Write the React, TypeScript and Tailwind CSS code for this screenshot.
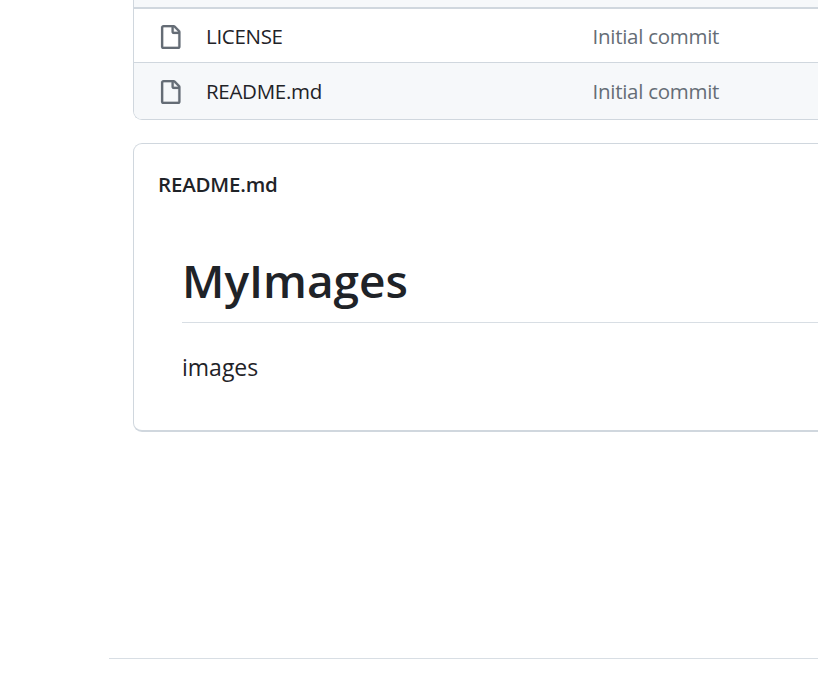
function FileIcon() {
  return (
    <svg viewBox="0 0 16 16" className="block h-6 w-6 shrink-0 fill-[#656d76] stroke-[#656d76] stroke-[0.12]" aria-hidden="true">
      <path d="M2 1.75C2 .784 2.784 0 3.75 0h6.586c.464 0 .909.184 1.237.513l2.914 2.914c.329.328.513.773.513 1.237v9.586A1.75 1.75 0 0 1 13.25 16h-9.5A1.75 1.75 0 0 1 2 14.25Zm1.75-.25a.25.25 0 0 0-.25.25v12.5c0 .138.112.25.25.25h9.5a.25.25 0 0 0 .25-.25V6h-2.75A1.75 1.75 0 0 1 9 4.25V1.5Zm6.75.062V4.25c0 .138.112.25.25.25h2.688l-.011-.013-2.914-2.914-.013-.011Z" />
    </svg>
  );
}

function FileRow({ name, message, last }: { name: string; message: string; last?: boolean }) {
  return (
    <div className={last ? "flex h-[57px] items-center border-t border-[#d0d7de] bg-[#f6f8fa] pt-px pl-6" : "flex h-[53px] items-center pt-[3px] pl-6"}>
      <FileIcon />
      <span className="ml-6 w-[386.5px] shrink-0 pb-[2px] text-[20.5px] leading-[30px] tracking-[-0.3px]">{name}</span>
      <span className="pb-[2px] text-[20.5px] leading-[30px] tracking-[-0.27px] text-[#656d76]">{message}</span>
    </div>
  );
}

export default function App() {
  return (
    <div className="h-[693px] w-[818px] overflow-hidden bg-white font-['Open_Sans',sans-serif] text-[20px] text-[#1f2328]">
      <div className="ml-[133px] h-[120px] overflow-hidden rounded-bl-[9px] border-b border-l border-[#d0d7de]">
        <div className="h-[9px] border-b-2 border-[#d0d7de] bg-[#f6f8fa]" />
        <FileRow name="LICENSE" message="Initial commit" />
        <FileRow name="README.md" message="Initial commit" last />
      </div>
      <div className="mt-[23px] ml-[133px] h-[289px] rounded-l-[9px] border border-r-0 border-b-2 border-[#d0d7de] pl-6">
        <h2 className="pt-[25px] text-[20.5px] leading-[30px] font-semibold tracking-[-0.2px]">README.md</h2>
        <div className="pl-6">
          <h1 className="mt-[50px] h-[74px] border-b border-[#d8dee4] text-[46px] leading-[62px] font-semibold">MyImages</h1>
          <p className="mt-[26px] text-[23px] leading-[36px]">images</p>
        </div>
      </div>
      <div className="mt-[226px] ml-[109px] border-t border-[#d8dee4]" />
    </div>
  );
}
